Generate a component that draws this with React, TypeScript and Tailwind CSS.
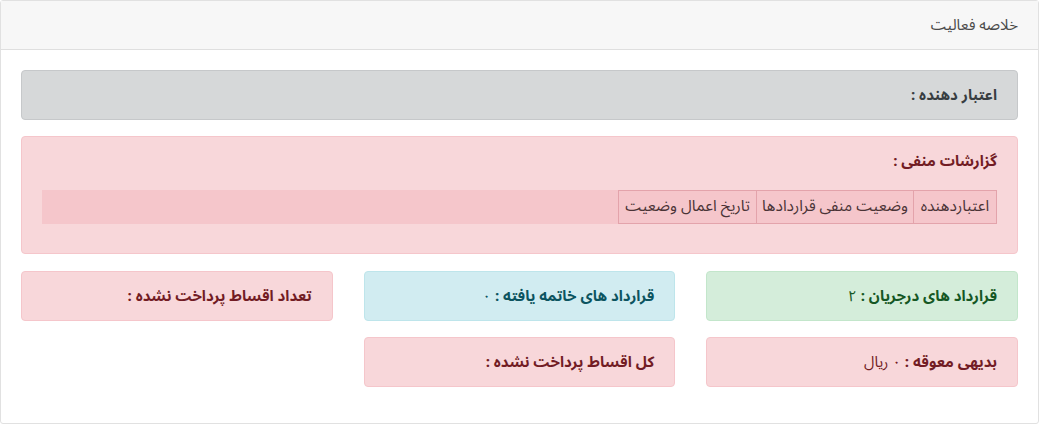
import React from "react";

const font = { fontFamily: '"Noto Sans Arabic", "DejaVu Sans", "Noto Sans", sans-serif' };

function Alert({
  tone,
  label,
  value,
}: {
  tone: "success" | "info" | "danger";
  label: string;
  value?: string;
}) {
  const cls =
    tone === "success"
      ? "bg-[#d4edda] border-[#c3e6cb] text-[#155724]"
      : tone === "info"
      ? "bg-[#d1ecf1] border-[#bee5eb] text-[#0c5460]"
      : "bg-[#f8d7da] border-[#f5c6cb] text-[#721c24]";
  return (
    <div className={`border rounded-[4px] px-5 h-[50px] flex items-center text-[15px] ${cls}`}>
      <span className="font-bold">{label}</span>
      {value !== undefined && <span className="font-normal mr-1">{value}</span>}
    </div>
  );
}

export default function App() {
  return (
    <div dir="rtl" style={font} className="w-[1039px] h-[425px] bg-white">
      <div className="border border-[#e1e1e1] rounded-[3px] h-[424px] flex flex-col">
        <div className="h-[49px] bg-[#f7f7f7] border-b border-[#dfdfdf] px-5 flex items-center text-[15px] text-[#4a4a4a]">
          خلاصه فعالیت
        </div>
        <div className="px-5 pt-5 flex flex-col">
          <div className="h-[50px] bg-[#d6d8d9] border border-[#c6c8ca] rounded-[4px] px-5 flex items-center text-[15px] font-bold text-[#383d41]">
            اعتبار دهنده :
          </div>
          <div className="mt-4 h-[118px] bg-[#f8d7da] border border-[#f5c6cb] rounded-[4px] px-5 pt-3 text-[#721c24]">
            <div className="h-6 leading-6 text-[15px] font-bold">گزارشات منفی :</div>
            <div className="mt-[17px] h-[34px] bg-[#f5c6cb] flex text-[15.5px] text-[#4a3336]">
              <div className="w-[84px] h-full border border-[#e3a3ab] flex items-center justify-center">
                اعتباردهنده
              </div>
              <div className="w-[157px] h-full border-y border-l border-[#e3a3ab] flex items-center justify-center">
                وضعیت منفی قراردادها
              </div>
              <div className="w-[138px] h-full border-y border-l border-[#e3a3ab] flex items-center justify-center">
                تاریخ اعمال وضعیت
              </div>
            </div>
          </div>
          <div className="mt-[17px] grid grid-cols-3 gap-x-[31px] gap-y-4">
            <Alert tone="success" label="قرارداد های درجریان :" value="۲" />
            <Alert tone="info" label="قرارداد های خاتمه یافته :" value="۰" />
            <Alert tone="danger" label="تعداد اقساط پرداخت نشده :" />
            <Alert tone="danger" label="بدیهی معوقه :" value="۰ ریال" />
            <Alert tone="danger" label="کل اقساط پرداخت نشده :" />
          </div>
        </div>
      </div>
    </div>
  );
}
